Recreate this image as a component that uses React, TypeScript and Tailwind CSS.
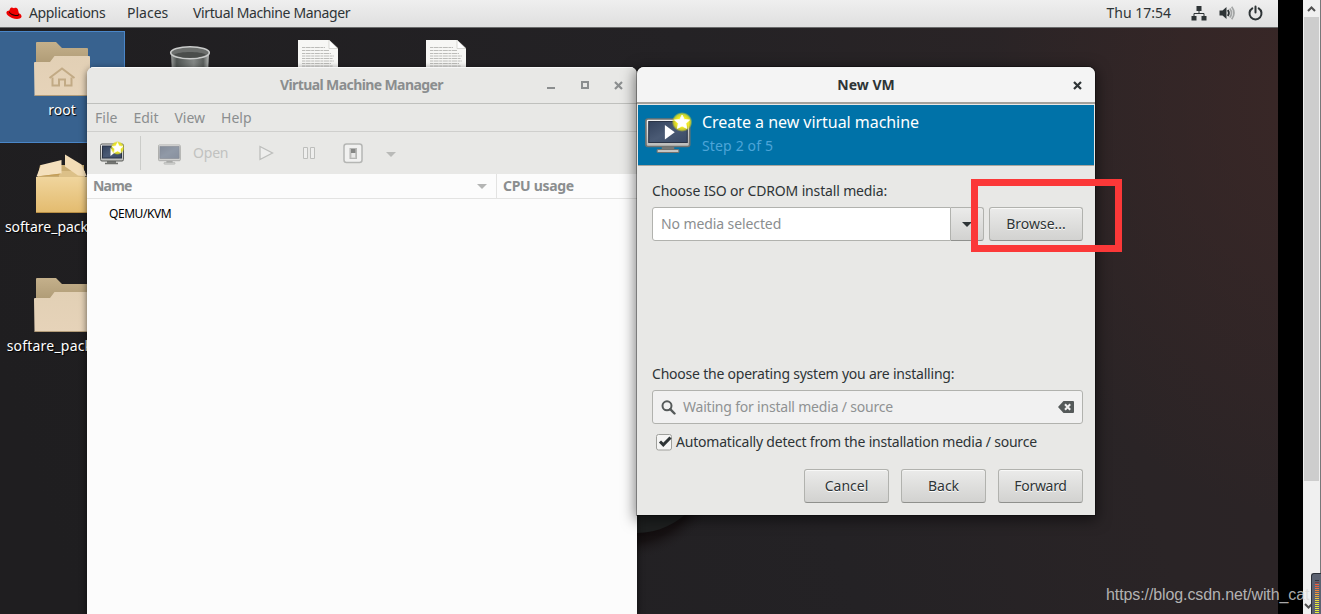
import type { ReactNode } from 'react';

const menuItems = ['File', 'Edit', 'View', 'Help'];

// level meter colours, top to bottom
const meter = [
    'bg-[#33353f]', 'bg-[#7c3b3c]', 'bg-[#f0603c]', 'bg-[#f0603c]', 'bg-[#f0703c]', 'bg-[#ee8a3c]', 'bg-[#ee8a3c]', 'bg-[#eeaa3c]', 'bg-[#eeaa3c]',
    'bg-[#eec83c]', 'bg-[#eee03c]', 'bg-[#eee03c]', 'bg-[#e8ee3c]', 'bg-[#e8ee3c]', 'bg-[#e8ee3c]', 'bg-[#e8ee3c]', 'bg-[#e8ee3c]', 'bg-[#d8ee3c]',
];

function Wallpaper() {
    return (
        <svg className="absolute inset-0" width="1278" height="614" viewBox="0 0 1278 614">
            <defs>
                <linearGradient id="wallBase" x1="0" y1="0.6" x2="1" y2="0.45">
                    <stop offset="0" stopColor="#1f1e20" />
                    <stop offset="0.6" stopColor="#242225" />
                    <stop offset="0.85" stopColor="#2a2426" />
                    <stop offset="1" stopColor="#2c2426" />
                </linearGradient>
                <radialGradient id="wallGlow">
                    <stop offset="0" stopColor="#402927" stopOpacity="0.7" />
                    <stop offset="1" stopColor="#402927" stopOpacity="0" />
                </radialGradient>
                <radialGradient id="wallShade">
                    <stop offset="0.6" stopColor="#0d0708" />
                    <stop offset="0.8" stopColor="#140f10" stopOpacity="0.85" />
                    <stop offset="1" stopColor="#232124" stopOpacity="0" />
                </radialGradient>
            </defs>
            <rect width="1278" height="614" fill="url(#wallBase)" />
            <ellipse cx="1320" cy="100" rx="330" ry="420" fill="url(#wallGlow)" />
            <ellipse cx="628" cy="474" rx="92" ry="86" fill="url(#wallShade)" />
            <path d="M600 500h98c-14 20-36 33-61 33h-37z" fill="#1e2020" />
        </svg>
    );
}

function RedHat() {
    return (
        <svg width="16" height="13" viewBox="0 0 16 13">
            <path d="M3.400 3.600C4 1 5 .2 6.500.7l1.600.5C9.500.4 11.400 1 12 2.800l.9 3.500c2 .8 3.200 2.500 2.400 4-1 2-5.600 2.300-9.300.6C2.700 9.500.3 7.500.4 5.600c.1-1.300 1.400-1.900 3-2z" fill="#e00" />
            <path d="M3.200 4.300c.5 1.800 5.200 4.300 8.200 3.600 1-.2 1.500-.8 1.400-1.500l.3 1c0 1.200-1.600 1.900-3.700 1.600C6.300 8.600 3 6.600 3.100 5z" fill="#1a0303" />
        </svg>
    );
}

function FolderIcon({ home }: { home?: boolean }) {
    return (
        <svg width="60" height="58" viewBox="0 0 60 58">
            <defs>
                <linearGradient id="folderBack" x1="0" y1="0" x2="0" y2="1">
                    <stop offset="0" stopColor="#c4b08b" />
                    <stop offset="1" stopColor="#a8946e" />
                </linearGradient>
                <linearGradient id="folderFront" x1="0" y1="0" x2="0" y2="1">
                    <stop offset="0" stopColor="#e2d0b5" />
                    <stop offset="1" stopColor="#e6d3b9" />
                </linearGradient>
            </defs>
            <path d="M4 2q0-1 1-1h19l6 6h25q1 0 1 1v22H4z" fill="url(#folderBack)" />
            <path d="M2 22q0-1 1-1h15l4.500-6h34.500q1 0 1 1v38q0 1-1 1H3.500q-1 0-1-1z" fill="url(#folderFront)" />
            <path d="M2.500 54.500h55" stroke="#b39c79" />
            {home && (
                <path d="M17.500 37l12.500-9.500L42.500 37M20.500 36.500V44.500H27v-6h6v6h6.500v-8" fill="none" stroke="#c2aa85" strokeWidth="2" />
            )}
        </svg>
    );
}

function BoxIcon() {
    return (
        <svg width="60" height="62" viewBox="0 0 60 62">
            <defs>
                <linearGradient id="boxFront" x1="0" y1="0" x2="0" y2="1">
                    <stop offset="0" stopColor="#f0d59d" />
                    <stop offset="1" stopColor="#e3bb6e" />
                </linearGradient>
            </defs>
            <path d="M8 11h44v15H5z" fill="#c9ac72" />
            <path d="M27 17h26v6H27z" fill="#dcc088" />
            <path d="M4 23h54v35q0 1-1 1H5q-1 0-1-1z" fill="url(#boxFront)" />
            <path d="M4 58.500h54" stroke="#b98f45" />
            <path d="M4.500 22.500L9 11l20.500-5v13.500z" fill="#f4e0bd" />
            <path d="M5 22.500l24-3-3 2z" fill="#c39c55" />
            <path d="M33 .5l16.500 10 5.500 12-9-1-13-9z" fill="#f2dcb6" />
        </svg>
    );
}

function TrashIcon() {
    return (
        <svg width="42" height="40" viewBox="0 0 42 40">
            <defs>
                <linearGradient id="trashBody">
                    <stop offset="0" stopColor="#9a9d9b" />
                    <stop offset="0.15" stopColor="#4f5452" />
                    <stop offset="0.6" stopColor="#858987" />
                    <stop offset="0.85" stopColor="#5a5e5c" />
                    <stop offset="1" stopColor="#b5b8b6" />
                </linearGradient>
            </defs>
            <path d="M2 8l1.500 30h35L40 8z" fill="url(#trashBody)" />
            <ellipse cx="21" cy="7.800" rx="19.300" ry="6" fill="#6b6e6c" stroke="#c9cbca" strokeWidth="1.600" />
            <path d="M5 9.500c6-3.500 26-3.500 32 0-6 4.500-26 4.500-32 0z" fill="#4a4d4b" />
        </svg>
    );
}

function TextFileIcon() {
    return (
        <svg width="40" height="52" viewBox="0 0 40 52">
            <path d="M0 0h31l9 9v43H0z" fill="#f7f7f5" />
            <path d="M31 0v8.500h9z" fill="#fff" stroke="#c8c8c4" strokeWidth=".7" />
            <path d="M4 7.500h23M4 10.500h27M4 13.500h29M4 16h32M4 18.500h31M4 21h32M4 23.500h29M4 26h31" stroke="#bcbcb9" strokeDasharray="3 .6 5 .6" />
        </svg>
    );
}

function MonitorIcon({ width, height, play, star, dim }: { width: number; height: number; play?: boolean; star?: boolean; dim?: boolean }) {
    return (
        <svg className={dim ? 'opacity-55' : ''} width={width} height={height} viewBox="0 0 48 42" preserveAspectRatio="none">
            <defs>
                <linearGradient id="screen" x1="0" y1="0" x2="1" y2="1">
                    <stop offset="0" stopColor="#33425c" />
                    <stop offset="0.5" stopColor="#4a5a74" />
                    <stop offset="1" stopColor="#3a4a66" />
                </linearGradient>
                <linearGradient id="bezel" x1="0" y1="0" x2="0" y2="1">
                    <stop offset="0" stopColor="#f4f4f4" />
                    <stop offset="1" stopColor="#b9bab8" />
                </linearGradient>
                <radialGradient id="glow">
                    <stop offset="0.5" stopColor="#f6ee1e" />
                    <stop offset="0.8" stopColor="#e8e31e" stopOpacity="0.8" />
                    <stop offset="1" stopColor="#c8d020" stopOpacity="0" />
                </radialGradient>
            </defs>
            <path d="M18 35h12v4H18z" fill="#777976" />
            <rect x="13.500" y="37.500" width="21" height="3" rx="1" fill="#c4c5c3" stroke="#6f716e" />
            <rect x="2.800" y="7" width="42" height="27.500" rx="2" fill="url(#bezel)" stroke="#70726f" strokeWidth="1.600" />
            <rect x="5.500" y="9.500" width="37" height="21" fill="url(#screen)" stroke="#2b3446" />
            {play && <path d="M21 13v14.500l9.500-7.200z" fill="#fff" />}
            {star && (
                <>
                    <circle cx="37.500" cy="10" r="10" fill="url(#glow)" />
                    <path d="M37.500 3l2.200 4.400 5 .6-3.600 3.400.9 5-4.500-2.400-4.500 2.400.9-5-3.600-3.400 5-.6z" fill="#fff" stroke="#fff" strokeWidth=".8" />
                </>
            )}
        </svg>
    );
}

// the toolbar size has a bigger star than the banner one
function NewVmSmallIcon() {
    return (
        <svg width="26" height="24" viewBox="0 0 26 24">
            <path d="M8 20h9v2H8z" fill="#777976" />
            <path d="M6 22.500h13" stroke="#6f716e" strokeWidth="1.500" />
            <rect x="1.500" y="3" width="23" height="17" rx="1.500" fill="url(#bezel)" stroke="#5c5e5b" />
            <rect x="3.500" y="5" width="19" height="12" fill="url(#screen)" stroke="#2b3446" />
            <path d="M11.500 7v8l5-4z" fill="#fff" />
            <circle cx="18.500" cy="7" r="7" fill="url(#glow)" />
            <path d="M18.500 1.500l1.700 3.400 3.800.5-2.700 2.600.6 3.800-3.400-1.800-3.400 1.800.6-3.800L13 5.400l3.800-.5z" fill="#fff" stroke="#fff" strokeWidth=".5" />
        </svg>
    );
}

function DesktopIcon({ label, children }: { label?: string; children: ReactNode }) {
    return (
        <div className="flex w-[124px] flex-col items-center whitespace-nowrap text-white [text-shadow:1px_1px_1px_#000]">
            {children}
            {label && <span className="mt-px leading-5">{label}</span>}
        </div>
    );
}

function DialogButton({ label, className }: { label: string; className: string }) {
    return (
        <div className={`flex h-[34px] items-center justify-center rounded-[3px] border border-[#b1b2ae] border-b-[#8f908d] bg-linear-to-b from-[#ebebea] to-[#d2d2d0] pb-px shadow-[inset_0_1px_#f8f8f7] [text-shadow:0_1px_#fff] ${className}`}>
            {label}
        </div>
    );
}

function CloseGlyph() {
    return (
        <svg width="9" height="9" viewBox="0 0 9 9">
            <path d="M1 1l7 7M8 1L1 8" stroke="currentColor" strokeWidth="2.200" />
        </svg>
    );
}

function TopBar() {
    return (
        <div className="relative flex h-[28px] items-center border-b border-[#6a6b6b] bg-linear-to-b from-[#efefef] to-[#dfdfdf] pb-px pl-1.5 text-[#2e3436]">
            <RedHat />
            <span className="ml-[7px] w-[98px] tracking-[-0.35px]">Applications</span>
            <span className="w-[66px]">Places</span>
            <span className="tracking-[-0.37px]">Virtual Machine Manager</span>
            <span className="mr-5 ml-auto">Thu 17:54</span>
            <svg className="mr-3" width="16" height="16" viewBox="0 0 16 16" fill="#2e3436">
                <path d="M5.500 1h5v5h-5zM.5 11h5v4.500h-5zM10.500 11h5v4.500h-5z" />
                <path d="M8 5v4M3 11.500V8.500h10v3" fill="none" stroke="#2e3436" />
            </svg>
            <svg className="mr-[13px]" width="16" height="16" viewBox="0 0 16 16">
                <path d="M.5 5.500h3L7.500 2v12l-4-3.500h-3z" fill="#2e3436" />
                <path d="M8.800 5q2.200 3 0 6" fill="none" stroke="#2e3436" strokeWidth="1.800" />
                <path d="M10.800 3.500q3.400 4.500 0 9M12.700 1.800q4.600 6.200 0 12.400" fill="none" stroke="#a3a5a5" strokeWidth="1.700" />
            </svg>
            <svg className="mr-[15px]" width="15" height="16" viewBox="0 0 15 16" fill="none" stroke="#2e3436" strokeWidth="2" strokeLinecap="round">
                <path d="M4.300 3.300a6 6 0 1 0 6.400 0M7.500 1.500v6" />
            </svg>
        </div>
    );
}

function ManagerWindow() {
    return (
        <div className="absolute top-[67px] left-[87px] flex h-[547px] w-[550px] flex-col overflow-hidden rounded-t-[7px] bg-[#fcfcfc] text-[#8b8e8f] shadow-[0_2px_7px_rgba(0,0,0,0.6)]">
            <div className="flex h-[37px] shrink-0 items-center border-b border-[#bfc0bd] bg-[#e8e8e6] shadow-[inset_0_1px_#f8f8f8]">
                <span className="ml-[193px] font-bold tracking-[-0.6px]">Virtual Machine Manager</span>
                <div className="mr-3.5 ml-auto flex items-center">
                    <div className="mt-[5px] mr-[26px] h-0.5 w-2 bg-[#8b8e8f]" />
                    <div className="mr-[25px] size-2 border-2 border-[#8b8e8f]" />
                    <CloseGlyph />
                </div>
            </div>
            <div className="flex h-[28px] shrink-0 items-center gap-4 border-b border-[#cfcfcd] bg-[#e8e8e6] pl-2">
                {menuItems.map((item) => (
                    <span key={item}>{item}</span>
                ))}
            </div>
            <div className="flex h-[42px] shrink-0 items-center bg-[#e8e8e6] text-[#c1c2c0]">
                <div className="ml-3"><NewVmSmallIcon /></div>
                <div className="ml-[15px] h-[34px] w-px bg-[#cbccc9]" />
                <div className="ml-4"><MonitorIcon width={25} height={24} dim /></div>
                <span className="ml-[11px] w-[37px] tracking-[-0.2px]">Open</span>
                <svg className="ml-[29px]" width="15" height="16" viewBox="0 0 15 16">
                    <path d="M1 1.500v13L13.500 8z" fill="#eeeeed" stroke="#bdbebc" strokeWidth="1.300" />
                </svg>
                <svg className="ml-7" width="14" height="14" viewBox="0 0 14 14" fill="#eeeeed" stroke="#bdbebc">
                    <path d="M1.500 1.500h4v11h-4zM8.500 1.500h4v11h-4z" />
                </svg>
                <svg className="ml-[27px]" width="20" height="21" viewBox="0 0 20 21">
                    <rect x="1" y="1" width="18" height="18.500" rx="2.500" fill="#f1f1f0" stroke="#b5b6b4" strokeWidth="1.500" />
                    <rect x="7" y="5.500" width="6.500" height="10" fill="#c4c5c3" stroke="#b5b6b4" />
                    <rect x="8" y="6" width="4.500" height="4" fill="#858684" />
                    <rect x="8.500" y="10" width="3.500" height="4.500" fill="#e9e9e8" />
                </svg>
                <svg className="ml-[23px] mt-0.5" width="10" height="5" viewBox="0 0 10 5">
                    <path d="M0 0h10L5 5z" fill="#b9bab8" />
                </svg>
            </div>
            <div className="flex h-[25px] shrink-0 border-b border-[#e3e3e2] font-bold">
                <div className="flex w-[410px] items-center justify-between border-r border-[#e3e3e2] pr-[9px] pl-1.5">
                    <span className="tracking-[-0.8px]">Name</span>
                    <svg width="10" height="5" viewBox="0 0 10 5">
                        <path d="M0 0h10L5 5z" fill="#b4b5b4" />
                    </svg>
                </div>
                <span className="ml-1.5 self-center tracking-[-0.3px]">CPU usage</span>
            </div>
            <span className="mt-1.5 ml-[22px] text-[12px] leading-[18px] tracking-[-0.45px] text-black">QEMU/KVM</span>
        </div>
    );
}

function NewVmDialog() {
    return (
        <div className="absolute top-[67px] left-[637px] h-[448px] w-[458px] rounded-t-[7px] bg-[#e8e8e6] text-[#2e3436] shadow-[0_0_0_1px_rgba(0,0,0,0.3),0_3px_14px_2px_rgba(0,0,0,0.5)]">
            <div className="relative flex h-[37px] items-center justify-center rounded-t-[7px] border-b-2 border-[#a3a19c] bg-[#f4f4f4]">
                <span className="font-bold">New VM</span>
                <div className="absolute top-3.5 right-[13.5px]"><CloseGlyph /></div>
            </div>
            <div className="mx-px mt-px flex h-[61px] border-b border-[#a9a69f] bg-[#0072a8]">
                <div className="mt-[7px] ml-[5px]"><MonitorIcon width={50} height={42} play star /></div>
                <div className="mt-[5px] ml-[9px] flex flex-col">
                    <span className="text-[16px] leading-6 tracking-[-0.04px] text-white">Create a new virtual machine</span>
                    <span className="leading-6 tracking-[0.15px] text-[#4da5d8]">Step 2 of 5</span>
                </div>
            </div>
            <div className="pr-3 pl-[15px]">
                <div className="mt-[15px] h-5 leading-5 tracking-[-0.15px]">Choose ISO or CDROM install media:</div>
                <div className="mt-1.5 flex h-[34px]">
                    <div className="flex w-[299px] items-center rounded-l-[3px] border border-[#b1b2ae] bg-white pl-2 tracking-[-0.1px] text-[#8b8e8f]">No media selected</div>
                    <div className="flex w-[33px] items-center rounded-r-[3px] border border-l-0 border-[#b1b2ae] border-b-[#8f908d] bg-linear-to-b from-[#ebebea] to-[#d2d2d0] pl-[11px]">
                        <svg width="10" height="5" viewBox="0 0 10 5">
                            <path d="M0 0h10L5 5z" fill="#2e3436" />
                        </svg>
                    </div>
                    <DialogButton label="Browse..." className="ml-[5px] w-[94px]" />
                </div>
                <div className="mt-[123px] h-5 leading-5 tracking-[-0.22px]">Choose the operating system you are installing:</div>
                <div className="mt-1.5 flex h-[34px] items-center rounded-[3px] border border-[#b1b2ae] bg-[#f1f1f1] pr-2 pl-2 text-[#8f9293]">
                    <svg width="15" height="15" viewBox="0 0 15 15" fill="none" stroke="#555a5a">
                        <circle cx="6" cy="5.800" r="4.500" strokeWidth="2" />
                        <path d="M9.200 9.200l4.300 4.300" strokeWidth="2.400" strokeLinecap="round" />
                    </svg>
                    <span className="ml-[7px] tracking-[-0.2px]">Waiting for install media / source</span>
                    <svg className="ml-auto" width="16" height="12" viewBox="0 0 16 12">
                        <path d="M0 6l5.500-6H15q1 0 1 1v10q0 1-1 1H5.500z" fill="#555a5a" />
                        <path d="M7 3.300l5.200 5.400M12.200 3.300L7 8.700" stroke="#f1f1f1" strokeWidth="2" />
                    </svg>
                </div>
                <div className="mt-2 flex h-5 items-center">
                    <svg className="ml-1" width="16" height="17" viewBox="0 0 16 17">
                        <rect x=".5" y=".5" width="15" height="15.500" rx="2" fill="#f5f5f4" stroke="#9fa09c" />
                        <path d="M4 7.500l3.300 3.300 7.200-7.300" fill="none" stroke="#2e3436" strokeWidth="3" />
                    </svg>
                    <span className="ml-1 tracking-[-0.21px]">Automatically detect from the installation media / source</span>
                </div>
                <div className="mt-[17px] flex justify-end gap-3">
                    <DialogButton label="Cancel" className="w-[85px]" />
                    <DialogButton label="Back" className="w-[85px]" />
                    <DialogButton label="Forward" className="w-[85px] tracking-[-0.3px]" />
                </div>
            </div>
        </div>
    );
}

function ScrollTrack() {
    return (
        <div className="flex h-[614px] w-[18px] flex-col items-center border-r border-[#77787a] bg-[#f0f0f0]">
            <svg className="mt-1.5" width="9" height="6" viewBox="0 0 9 6">
                <path d="M1 5l3.500-3.500L8 5" fill="none" stroke="#505050" strokeWidth="2" />
            </svg>
            <div className="mt-[5px] h-[464px] w-[15px] bg-[#cdcdcd]" />
            <svg className="mt-[122px] -ml-1.5" width="9" height="6" viewBox="0 0 9 6">
                <path d="M1 1l3.500 3.500L8 1" fill="none" stroke="#505050" strokeWidth="2" />
            </svg>
        </div>
    );
}

export default function App() {
    return (
        <div className="relative flex h-[614px] w-[1321px] overflow-hidden bg-black font-['Noto_Sans',sans-serif] text-[14px] leading-5">
            <div className="relative h-[614px] w-[1278px] overflow-hidden">
                <Wallpaper />
                <TopBar />
                <div className="absolute top-[31px] left-0 h-[112px] w-[125px] border border-l-0 border-[#4a86c8] bg-[#38628f]" />
                <div className="absolute top-[41px] left-0"><DesktopIcon label="root"><FolderIcon home /></DesktopIcon></div>
                <div className="absolute top-[154px] left-0"><DesktopIcon label="softare_packages"><BoxIcon /></DesktopIcon></div>
                <div className="absolute top-[277px] left-0 tracking-[0.2px]"><DesktopIcon label="softare_package"><FolderIcon /></DesktopIcon></div>
                <div className="absolute top-[45px] left-[128px]"><DesktopIcon><TrashIcon /></DesktopIcon></div>
                <div className="absolute top-[40px] left-[256px]"><DesktopIcon><TextFileIcon /></DesktopIcon></div>
                <div className="absolute top-[40px] left-[384px]"><DesktopIcon><TextFileIcon /></DesktopIcon></div>
                <ManagerWindow />
                <NewVmDialog />
                <div className="absolute top-[179px] left-[971px] h-[73px] w-[151px] border-[7px] border-[#fb3838]" />
            </div>
            <div className="w-[25px] bg-black" />
            <ScrollTrack />
            <span className="absolute top-[585px] left-[1106px] w-[204px] overflow-hidden font-['Liberation_Sans',sans-serif] text-[16px] leading-5 tracking-[-0.1px] whitespace-nowrap text-[#d8d8d8]/80">
                https://blog.csdn.net/with_cat
            </span>
            <div className="absolute top-[573px] left-[1311px] flex h-[41px] w-[10px] flex-col gap-px rounded-tl-[3px] border-t border-l border-[#2c3038] bg-[#5c6271] pt-1.5 pl-[3px]">
                {meter.map((color, i) => (
                    <div key={i} className={`h-px w-1 shrink-0 ${color}`} />
                ))}
            </div>
        </div>
    );
}
